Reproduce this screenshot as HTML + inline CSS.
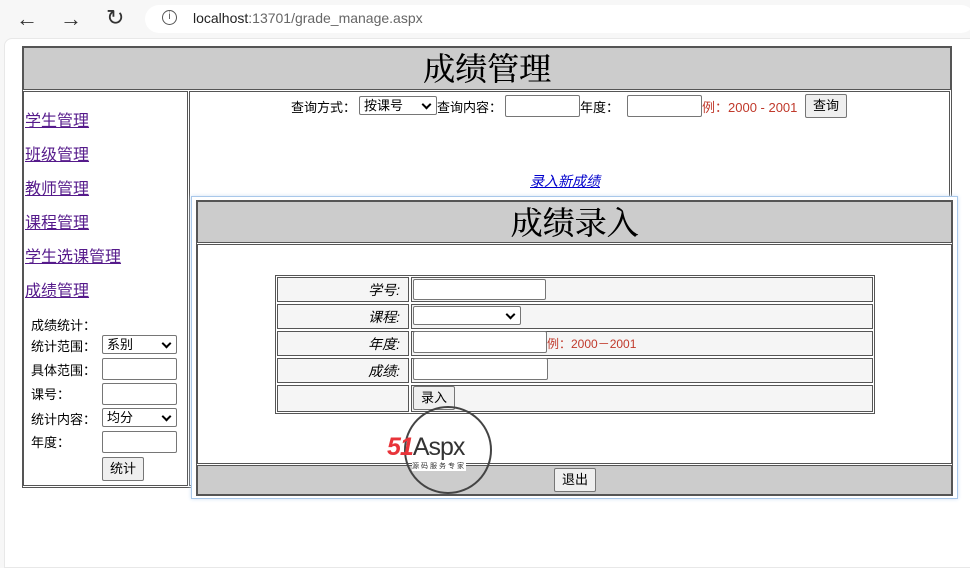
<!DOCTYPE html>
<html><head><meta charset="utf-8"><style>
*{box-sizing:border-box;margin:0;padding:0}
body{width:970px;height:556px;background:#f7f7f7;font-family:"Liberation Sans","Noto Sans CJK SC",sans-serif;font-size:13px;color:#000;position:relative;overflow:hidden}
.a{position:absolute}
.page{left:4px;top:38px;width:970px;height:530px;background:#fff;border-radius:8px 0 0 0;border:1px solid #e8e8e8}
.pill{left:145px;top:5px;width:830px;height:28px;background:#fff;border-radius:14px}
.bx{border:1px solid #555}
.gray{background:#ccc}
.serif{font-family:"Liberation Serif","Noto Serif CJK SC",serif}
a{color:#551a8b;font-size:16px;text-decoration:underline}
.inp{background:#fff;border:1px solid #767676;border-radius:2px}
.btn{background:#efefef;border:1px solid #767676;border-radius:2px;text-align:center;font-size:13px;line-height:20px}
.sel{background:#fff;border:1px solid #767676;border-radius:2px;font-size:13px;padding-left:4px;line-height:17px}
.sel:after{content:"";position:absolute;right:6px;top:4px;width:5px;height:5px;border-right:2px solid #000;border-bottom:2px solid #000;transform:rotate(45deg)}
.lab{font-size:13px}
.red{color:#c0392b;font-size:13px}
.cell{background:#f5f5f5;border:1px solid #555}
.lc{text-align:right;font-style:italic;font-size:14px;padding-right:8px;line-height:24px}
.t{text-shadow:0.4px 0 0 #000}
</style></head><body>
<div class="a pill"></div>
<div class="a" style="left:16px;top:6px;font-size:22px;color:#333">←</div>
<div class="a" style="left:60px;top:6px;font-size:22px;color:#333">→</div>
<div class="a" style="left:106px;top:5px;font-size:22px;color:#333">↻</div>
<div class="a" style="left:162px;top:10px;width:15px;height:15px;border:1.5px solid #555;border-radius:50%;font-size:10px;text-align:center;line-height:12px;color:#555">i</div>
<div class="a" style="left:193px;top:10px;font-size:14px;color:#222">localhost<span style="color:#666">:13701/grade_manage.aspx</span></div>
<div class="a page"></div>

<div class="a bx" style="left:22px;top:46px;width:930px;height:442px"></div>
<div class="a bx gray serif t" style="left:23px;top:47px;width:928px;height:43px;text-align:center;font-size:32px;line-height:42px">成绩管理</div>
<div class="a bx" style="left:23px;top:91px;width:165px;height:395px"></div>
<div class="a bx" style="left:189px;top:91px;width:761px;height:395px"></div>

<a class="a" style="left:25px;top:107px">学生管理</a>
<a class="a" style="left:25px;top:141px">班级管理</a>
<a class="a" style="left:25px;top:175px">教师管理</a>
<a class="a" style="left:25px;top:209px">课程管理</a>
<a class="a" style="left:25px;top:243px">学生选课管理</a>
<a class="a" style="left:25px;top:277px">成绩管理</a>

<div class="a lab" style="left:31px;top:315px">成绩统计：</div>
<div class="a lab" style="left:31px;top:336px">统计范围：</div>
<div class="a sel" style="left:102px;top:335px;width:75px;height:19px">系别</div>
<div class="a lab" style="left:31px;top:360px">具体范围：</div>
<div class="a inp" style="left:102px;top:358px;width:75px;height:22px"></div>
<div class="a lab" style="left:31px;top:384px">课号：</div>
<div class="a inp" style="left:102px;top:383px;width:75px;height:22px"></div>
<div class="a lab" style="left:31px;top:409px">统计内容：</div>
<div class="a sel" style="left:102px;top:408px;width:75px;height:19px">均分</div>
<div class="a lab" style="left:31px;top:432px">年度：</div>
<div class="a inp" style="left:102px;top:431px;width:75px;height:22px"></div>
<div class="a btn" style="left:102px;top:457px;width:42px;height:24px;line-height:22px">统计</div>

<div class="a lab" style="left:291px;top:97px">查询方式：</div>
<div class="a sel" style="left:359px;top:96px;width:78px;height:19px">按课号</div>
<div class="a lab" style="left:437px;top:97px">查询内容：</div>
<div class="a inp" style="left:505px;top:95px;width:75px;height:22px"></div>
<div class="a lab" style="left:580px;top:97px">年度：</div>
<div class="a inp" style="left:627px;top:95px;width:75px;height:22px"></div>
<div class="a red" style="left:702px;top:97px">例：2000 - 2001</div>
<div class="a btn" style="left:805px;top:94px;width:42px;height:24px;line-height:22px">查询</div>
<div class="a" style="left:530px;top:171px;font-size:14px;font-style:italic;color:#00c;text-decoration:underline">录入新成绩</div>

<div class="a" style="left:191px;top:196px;width:767px;height:303px;background:#fff;border:1px solid #a9c8ea;box-shadow:0 0 4px #cfe0f5"></div>
<div class="a bx" style="left:196px;top:200px;width:757px;height:296px"></div>
<div class="a bx gray serif t" style="left:197px;top:201px;width:755px;height:42px;text-align:center;font-size:32px;line-height:42px">成绩录入</div>
<div class="a bx" style="left:197px;top:244px;width:755px;height:220px"></div>
<div class="a bx gray" style="left:197px;top:465px;width:755px;height:30px"></div>
<div class="a btn" style="left:554px;top:468px;width:42px;height:24px;line-height:22px">退出</div>

<div class="a bx" style="left:275px;top:275px;width:600px;height:139px"></div>
<div class="a cell lc" style="left:277px;top:277px;width:132px;height:25px">学号:</div>
<div class="a cell" style="left:411px;top:277px;width:462px;height:25px"></div>
<div class="a cell lc" style="left:277px;top:304px;width:132px;height:25px">课程:</div>
<div class="a cell" style="left:411px;top:304px;width:462px;height:25px"></div>
<div class="a cell lc" style="left:277px;top:331px;width:132px;height:25px">年度:</div>
<div class="a cell" style="left:411px;top:331px;width:462px;height:25px"></div>
<div class="a cell lc" style="left:277px;top:358px;width:132px;height:25px">成绩:</div>
<div class="a cell" style="left:411px;top:358px;width:462px;height:25px"></div>
<div class="a cell" style="left:277px;top:385px;width:132px;height:27px"></div>
<div class="a cell" style="left:411px;top:385px;width:462px;height:27px"></div>
<div class="a inp" style="left:413px;top:279px;width:133px;height:21px"></div>
<div class="a sel" style="left:413px;top:306px;width:108px;height:19px"></div>
<div class="a inp" style="left:413px;top:331px;width:134px;height:22px"></div>
<div class="a red" style="left:547px;top:335px;font-size:12px">例：2000－2001</div>
<div class="a inp" style="left:413px;top:358px;width:135px;height:22px"></div>
<div class="a btn" style="left:413px;top:386px;width:42px;height:24px;line-height:22px">录入</div>

<div class="a" style="left:404px;top:406px;width:88px;height:88px;border:2px solid #444;border-radius:50%"></div>
<div class="a" style="left:387px;top:433px;font-size:25px;font-weight:bold;font-style:italic;color:#e8343a;letter-spacing:-1px">51<span style="color:#333;font-style:normal;font-weight:normal">Aspx</span></div>
<div class="a" style="left:412px;top:461px;font-size:7px;color:#333;letter-spacing:2px;background:#fff">源码服务专家</div>
</body></html>
